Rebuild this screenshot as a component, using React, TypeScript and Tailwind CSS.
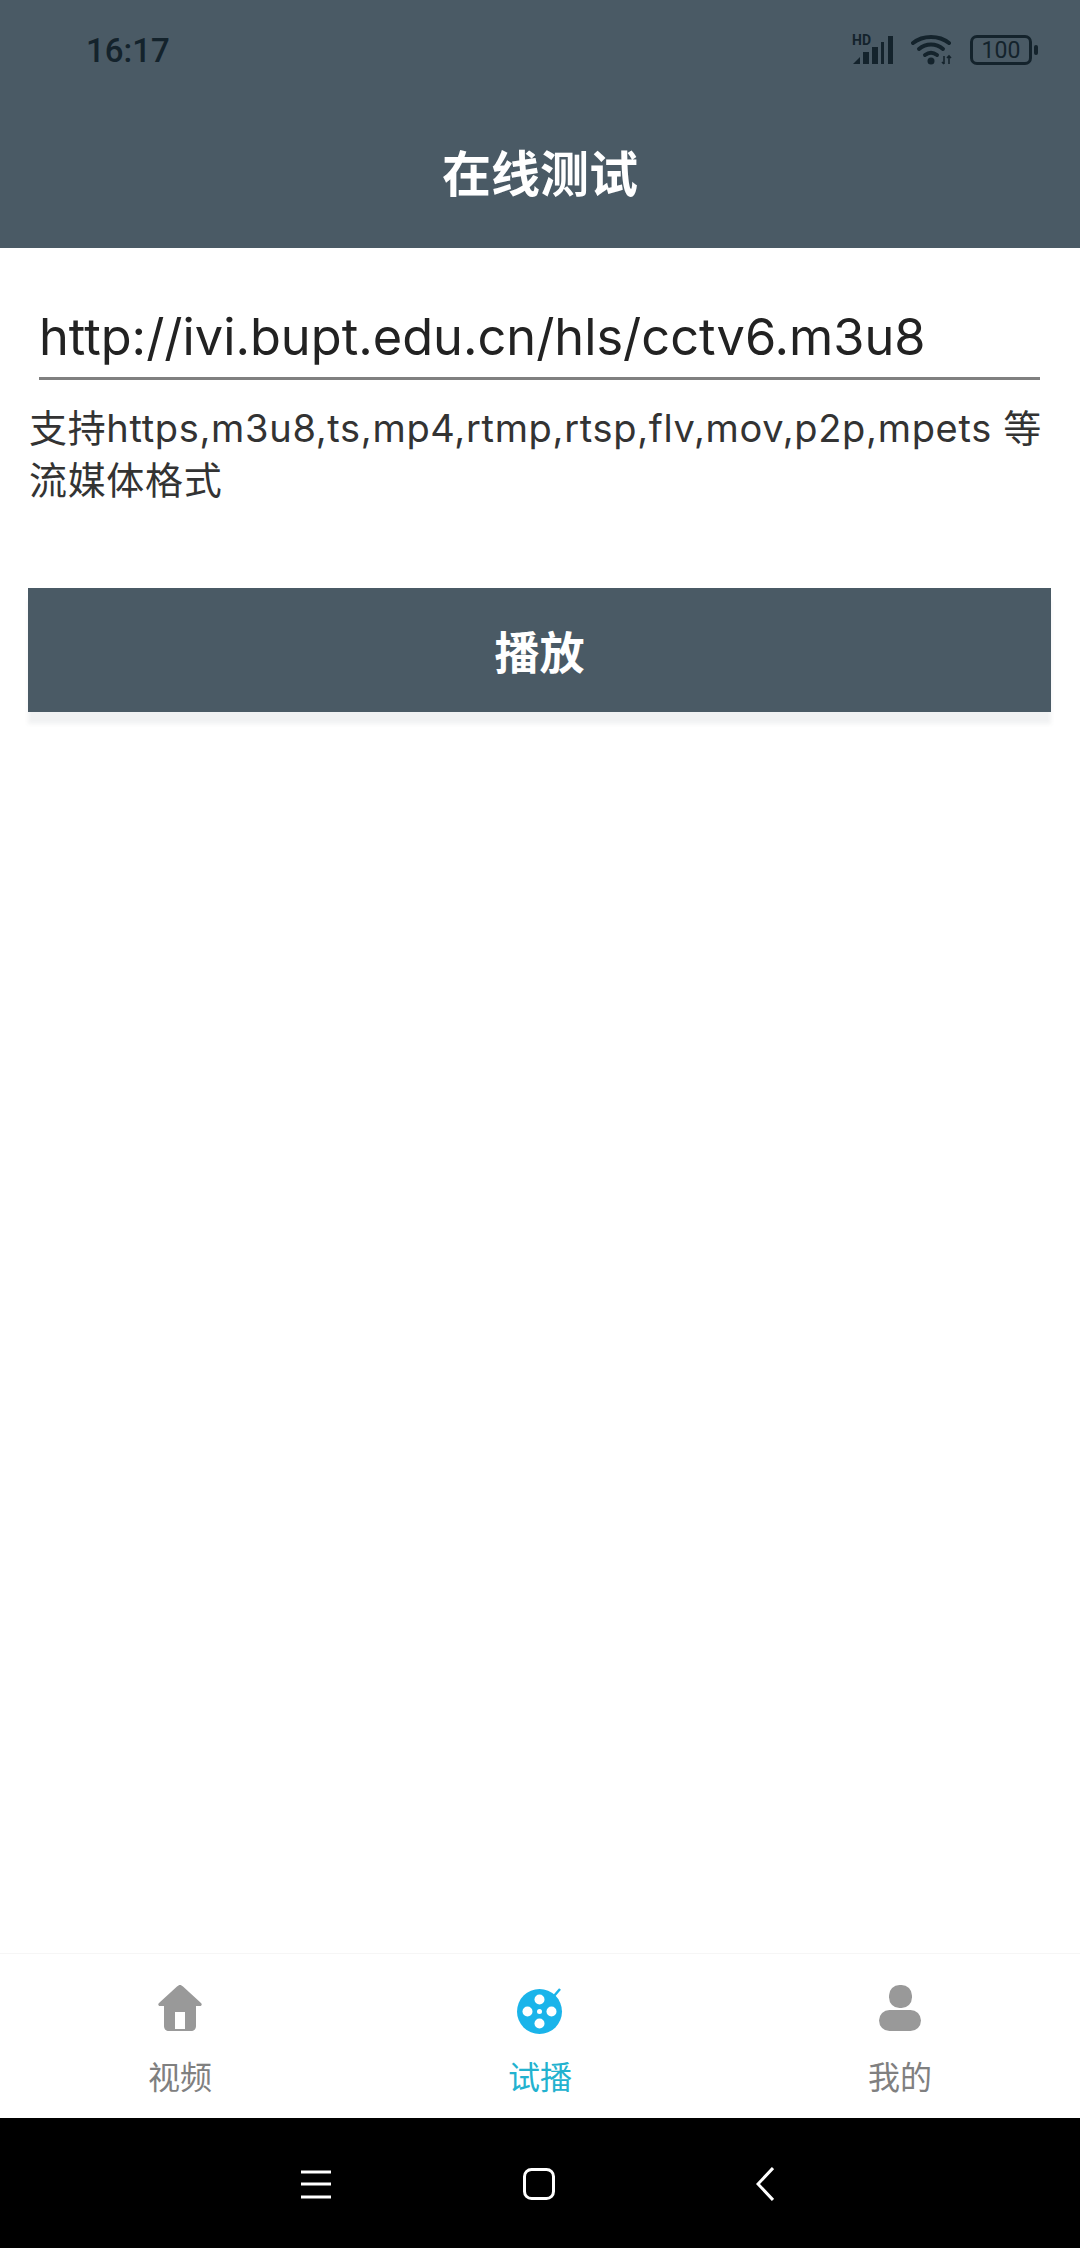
import React from 'react';

const cjk = 'font-["Inter","Noto_Sans_CJK_SC",sans-serif]';

const SignalIcon = () => (
  <div className="relative w-[42px] h-[30px]">
    <span className="absolute left-0 top-[-2px] text-[14px] leading-[14px] font-bold text-[#14232c] font-['Roboto',sans-serif]">HD</span>
    <svg width="42" height="30" viewBox="0 0 42 30" className="block">
      <path d="M1 29 L8 22 V29 Z" fill="#14232c" />
      <rect x="11" y="17" width="6" height="12" fill="#14232c" />
      <rect x="20" y="12" width="6" height="17" fill="#14232c" />
      <rect x="29" y="7" width="3" height="22" fill="#14232c" />
      <rect x="36" y="1" width="5" height="28" fill="#14232c" />
    </svg>
  </div>
);

const WifiIcon = () => (
  <svg width="42" height="30" viewBox="0 0 42 30" className="block">
    <g fill="none" stroke="#14232c" strokeWidth="4" strokeLinecap="round">
      <path d="M2 8 C12 0 28 0 38 8" />
      <path d="M8 14 C15 8 25 8 32 14" />
      <path d="M14 20 C18 17 22 17 26 20" />
    </g>
    <circle cx="20" cy="26" r="3.5" fill="#14232c" />
    <path d="M33 21 V29 M31 27 L33 29 M38 29 V21 M36 23 L38 21 L40 23" fill="none" stroke="#14232c" strokeWidth="1.6" />
  </svg>
);

const BatteryIcon = () => (
  <div className="flex items-center gap-[2px]">
    <div className="w-[62px] h-[30px] rounded-[7px] border-[3px] border-[#14232c] flex items-center justify-center">
      <span className="text-[23px] leading-none text-[#14232c] font-['Roboto',sans-serif]">100</span>
    </div>
    <div className="w-[4px] h-[10px] rounded-[2px] bg-[#14232c]" />
  </div>
);

const HomeIcon = () => (
  <svg width="44" height="46" viewBox="0 0 44 46" className="block">
    <path
      fillRule="evenodd"
      d="M22 0 C23 0 24 .6 25 1.6 L43 18 C44.4 19.4 43.6 21 42 21 H38 V41 C38 44 36 46 33 46 H11 C8 46 6 44 6 41 V21 H2 C.4 21 -.4 19.4 1 18 L19 1.6 C20 .6 21 0 22 0 Z M17 27 V44 H27 V27 Z"
      fill="#999999"
    />
  </svg>
);

const ReelIcon = () => (
  <svg width="46" height="50" viewBox="0 0 46 50" className="block mt-[4px]">
    <circle cx="22.5" cy="26.5" r="22.5" fill="#1ab4ea" />
    <path d="M37 11 L43 4" stroke="#1ab4ea" strokeWidth="2.5" />
    <circle cx="22.5" cy="14.5" r="5" fill="#ffffff" />
    <circle cx="22.5" cy="38.5" r="5" fill="#ffffff" />
    <circle cx="10.5" cy="26.5" r="5" fill="#ffffff" />
    <circle cx="34.5" cy="26.5" r="5" fill="#ffffff" />
    <circle cx="22.5" cy="26.5" r="2.5" fill="#ffffff" />
  </svg>
);

const UserIcon = () => (
  <svg width="42" height="46" viewBox="0 0 42 46" className="block">
    <rect x="10" y="0" width="23" height="23" rx="10.5" fill="#999999" />
    <rect x="0" y="25" width="42" height="21" rx="10.5" fill="#999999" />
  </svg>
);

const tabs = [
  { label: '视频', icon: <HomeIcon />, active: false },
  { label: '试播', icon: <ReelIcon />, active: true },
  { label: '我的', icon: <UserIcon />, active: false },
];

export default function App() {
  return (
    <div className={`w-[1080px] h-[2248px] flex flex-col bg-white overflow-hidden ${cjk}`}>
      {/* Header with status bar */}
      <header className="h-[248px] shrink-0 bg-[#4a5a65]">
        <div className="h-[100px] flex items-center justify-between pl-[86px] pr-[42px]">
          <span className="text-[33px] leading-none font-medium text-[#14232c] font-['Roboto',sans-serif]">16:17</span>
          <div className="flex items-center gap-[17px]">
            <SignalIcon />
            <WifiIcon />
            <BatteryIcon />
          </div>
        </div>
        <div className="mt-[27px] h-[96px] flex items-center justify-center text-[49px] font-semibold text-white">
          在线测试
        </div>
      </header>

      {/* URL field */}
      <div className="ml-[39px] w-[1001px] h-[132px] shrink-0 flex items-end border-b-[3px] border-[#808080] pb-[5px]">
        <span className="text-[50.5px] leading-[70px] text-[#222222] whitespace-nowrap">
          http://ivi.bupt.edu.cn/hls/cctv6.m3u8
        </span>
      </div>

      <p className="ml-[29px] w-[1020px] mt-[22px] text-[38px] tracking-[0.68px] leading-[52px] text-[#333333]">
        支持https,m3u8,ts,mp4,rtmp,rtsp,flv,mov,p2p,mpets 等流媒体格式
      </p>

      <button className="ml-[28px] mr-[29px] mt-[82px] pt-[8px] h-[124px] shrink-0 bg-[#4a5a65] text-white text-[45px] font-semibold shadow-[0_12px_4px_rgba(74,90,101,0.08)]">
        播放
      </button>

      <div className="flex-1" />

      {/* Bottom tabs */}
      <nav className="h-[165px] shrink-0 flex border-t border-[#f6f6f6] bg-white">
        {tabs.map((tab) => (
          <div key={tab.label} className="flex-1 flex flex-col items-center pt-[31px]">
            <div className="h-[46px] flex items-center justify-center">{tab.icon}</div>
            <span className={`mt-[28px] text-[32px] leading-[38px] ${tab.active ? 'text-[#23b2cf]' : 'text-[#808080]'}`}>
              {tab.label}
            </span>
          </div>
        ))}
      </nav>

      {/* Android nav bar */}
      <div className="h-[130px] shrink-0 bg-black flex items-start pl-[301px] pt-[49px]">
        <div className="flex items-center">
          <svg width="30" height="32" viewBox="0 0 30 32" className="block">
            <g stroke="#ffffff" strokeWidth="3">
              <path d="M0 4 H30" />
              <path d="M0 16 H30" />
              <path d="M0 29 H30" />
            </g>
          </svg>
          <svg width="32" height="32" viewBox="0 0 32 32" className="block ml-[192px]">
            <rect x="1.5" y="1.5" width="29" height="29" rx="7" fill="none" stroke="#ffffff" strokeWidth="3" />
          </svg>
          <svg width="18" height="34" viewBox="0 0 18 34" className="block ml-[201px]">
            <path d="M17 1 L2 17 L17 33" fill="none" stroke="#ffffff" strokeWidth="3" />
          </svg>
        </div>
      </div>
    </div>
  );
}
